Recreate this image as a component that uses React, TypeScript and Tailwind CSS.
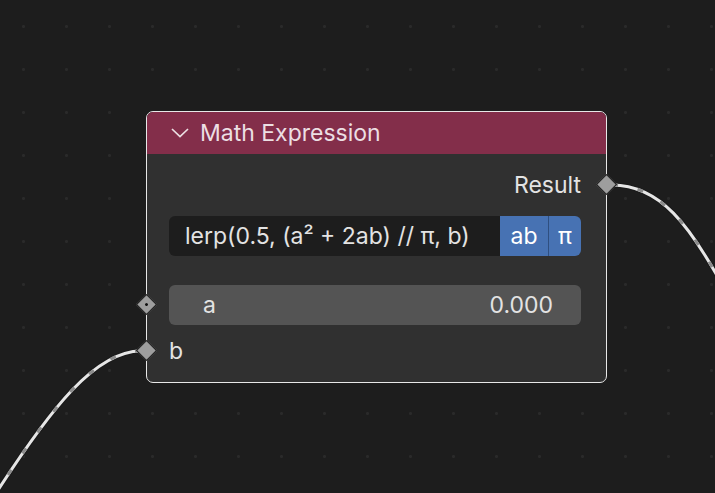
import React from 'react';

const Socket = ({ dot = false, className = '' }: { dot?: boolean; className?: string }) => (
  <div className={`absolute w-[15px] h-[15px] rotate-45 bg-[#9e9e9e] border border-[#1a1a1a] flex items-center justify-center ${className}`}>
    {dot && <div className="w-[3px] h-[3px] bg-[#111] rounded-full" />}
  </div>
);

const Wires = () => (
  <svg className="absolute inset-0 pointer-events-none" width="715" height="493" viewBox="0 0 715 493" fill="none">
    <path d="M612 185 C 660 185, 690 225, 725 290" stroke="#1a1a1a" strokeWidth="5" />
    <path d="M612 185 C 660 185, 690 225, 725 290" stroke="#e6e6e6" strokeWidth="3" />
    <path d="M612 185 C 660 185, 690 225, 725 290" stroke="#8c8c8c" strokeWidth="3" strokeDasharray="6 20" />
    <path d="M141 351 C 95 351, 50 410, -2 490" stroke="#1a1a1a" strokeWidth="5" />
    <path d="M141 351 C 95 351, 50 410, -2 490" stroke="#e6e6e6" strokeWidth="3" />
    <path d="M141 351 C 95 351, 50 410, -2 490" stroke="#8c8c8c" strokeWidth="3" strokeDasharray="6 20" />
  </svg>
);

const MathNode = () => (
  <div className="absolute left-[146px] top-[111px] w-[461px] h-[272px] rounded-[7px] border border-[#e8e8e8] bg-[#303030] flex flex-col">
    <div className="h-[42px] rounded-t-[6px] bg-[#832e4a] flex items-center pl-[23px] gap-[10px] text-[23px] text-[#ecdfe3]">
      <svg width="20" height="12" viewBox="0 0 20 12" fill="none" stroke="#ecdfe3" strokeWidth="1.7">
        <path d="M2 2 L10 9.5 L18 2" />
      </svg>
      <span>Math Expression</span>
    </div>
    <div className="flex flex-col px-[22px] pr-[25px] text-[23px] text-[#e3e3e3]">
      <div className="h-[30px] mt-[16px] flex items-center justify-end">Result</div>
      <div className="h-[40px] mt-[16px] flex rounded-[6px] overflow-hidden">
        <div className="flex-1 bg-[#1d1d1d] flex items-center pl-[16px] whitespace-nowrap">lerp(0.5, (a² + 2ab) // π, b)</div>
        <div className="w-[49px] bg-[#4772b3] flex items-center justify-center text-white border-r border-[#2f4f80]">ab</div>
        <div className="w-[32px] bg-[#4772b3] flex items-center justify-center text-white">π</div>
      </div>
      <div className="h-[40px] mt-[29px] rounded-[6px] bg-[#545454] flex items-center justify-between pl-[34px] pr-[28px]">
        <span>a</span>
        <span>0.000</span>
      </div>
      <div className="h-[30px] mt-[11px] flex items-center">b</div>
    </div>
    <Socket className="right-[-8px] top-[65px]" />
    <Socket dot className="left-[-8px] top-[185px]" />
    <Socket className="left-[-8px] top-[231px]" />
  </div>
);

export default function App() {
  return (
    <div
      className="relative w-[715px] h-[493px] overflow-hidden bg-[#1d1d1d] bg-[radial-gradient(circle,#2a2a2a_1.3px,transparent_1.6px)] bg-[size:43px_43px] bg-[position:2px_5px]"
      style={{ fontFamily: 'Inter, "Noto Sans", sans-serif' }}
    >
      <Wires />
      <MathNode />
    </div>
  );
}
